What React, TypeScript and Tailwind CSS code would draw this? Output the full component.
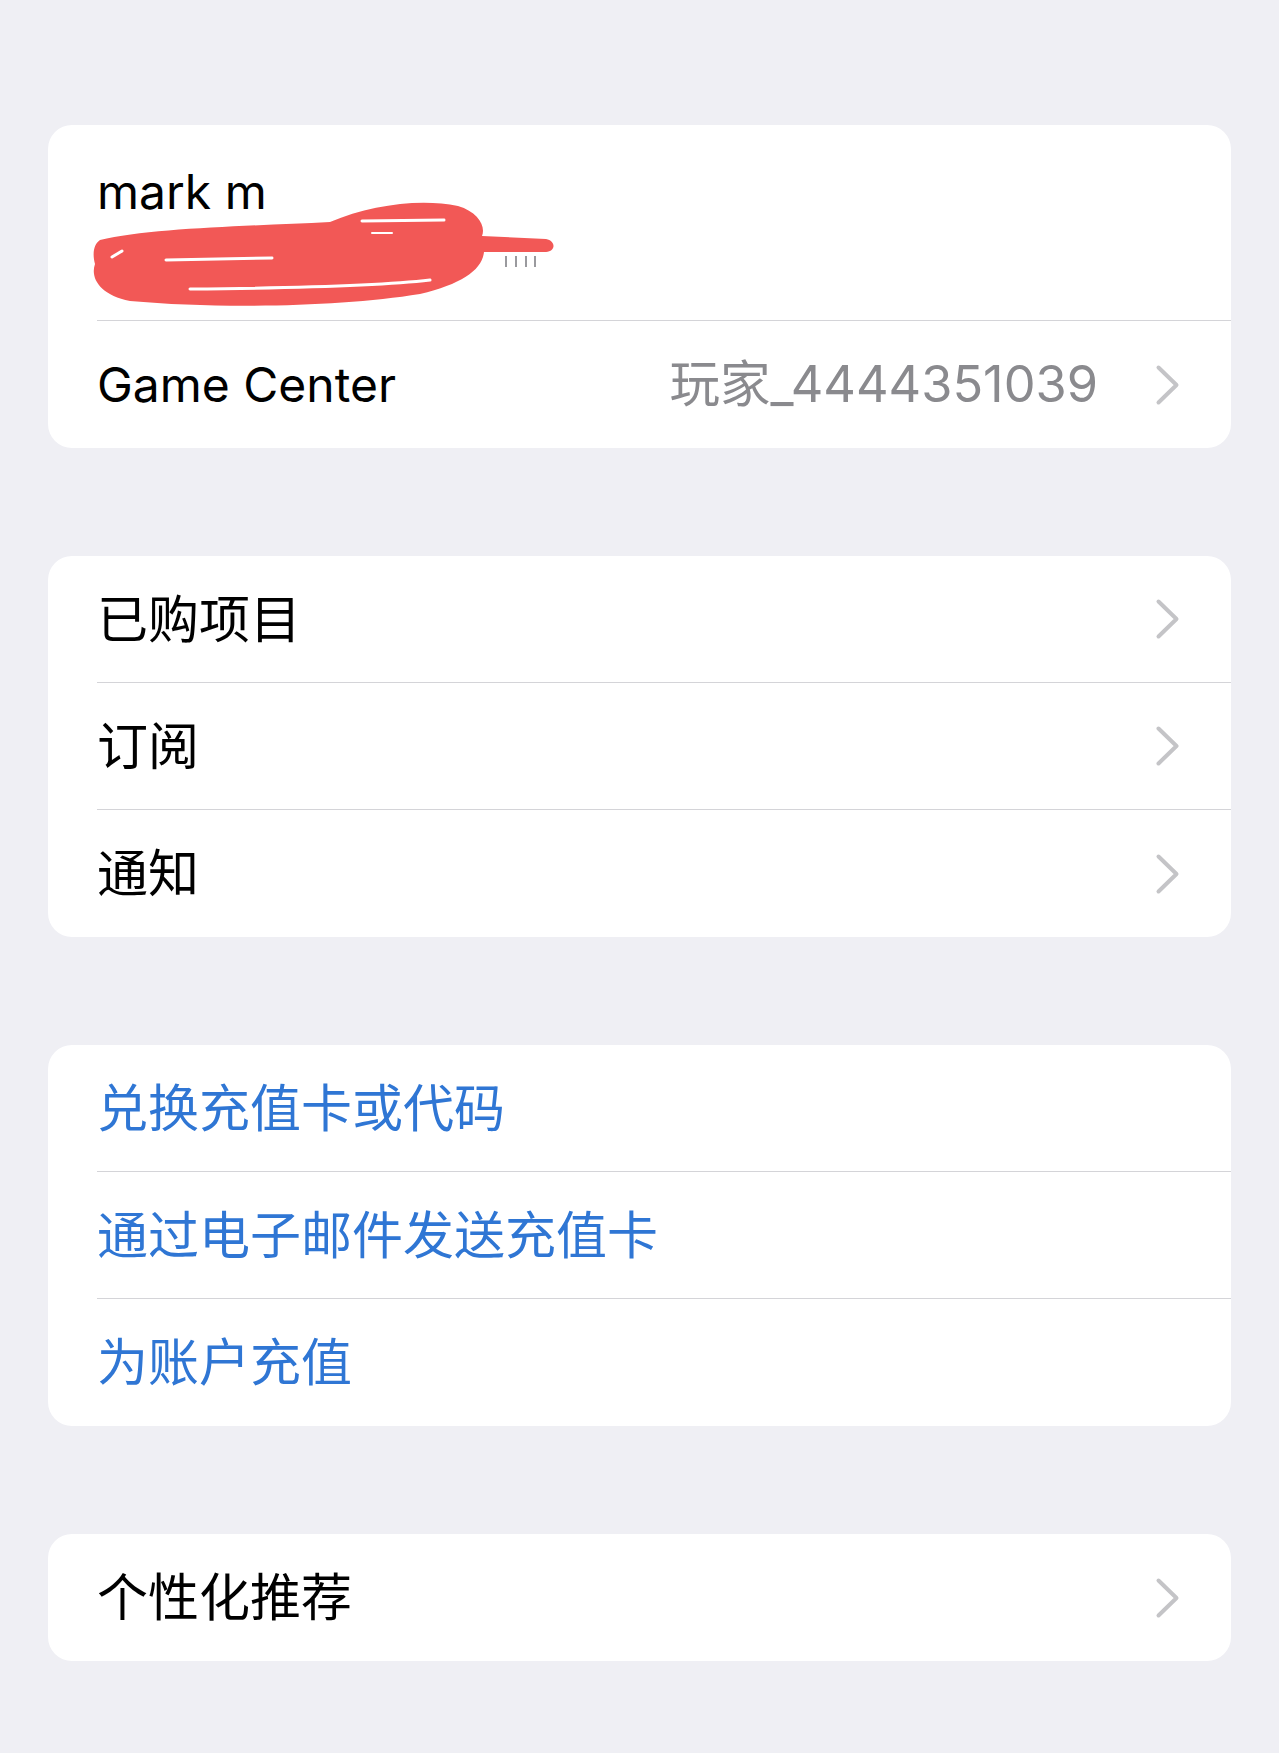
import React from 'react';

const font = { fontFamily: 'Inter, "Noto Sans CJK SC", sans-serif' };

const Chevron = () => (
  <svg width="25" height="42" viewBox="0 0 25 42" fill="none" className="shrink-0">
    <path d="M3.5 3.5 L21.5 21 L3.5 38.5" stroke="#c4c4c7" strokeWidth="4" strokeLinecap="round" strokeLinejoin="round" />
  </svg>
);

type RowProps = {
  label: string;
  value?: string;
  blue?: boolean;
  latin?: boolean;
  chevron?: boolean;
  last?: boolean;
};

const Row = ({ label, value, blue, latin, chevron, last }: RowProps) => (
  <div className="flex h-[127px] pl-[49px]">
    <div
      className={`flex flex-1 items-center pr-[51px] ${last ? '' : 'border-b border-[#d4d4d8]'}`}
    >
      <span
        className={`flex-1 leading-none ${latin ? 'text-[48px]' : 'text-[51px]'} ${
          blue ? 'text-[#2f76d4]' : 'text-black'
        }`}
      >
        {label}
      </span>
      {value && <span className="mr-[57px] text-[50.5px] leading-none text-[#8a8a8e]">{value}</span>}
      {chevron && <Chevron />}
    </div>
  </div>
);

// red pen scribble over the email address
const Scribble = () => (
  <svg
    className="absolute left-[40px] top-[70px]"
    width="470"
    height="120"
    viewBox="88 195 470 120"
    fill="none"
  >
    <path
      d="M100 240 C150 228 250 226 330 222 C370 205 420 198 458 206 C478 212 486 226 482 236 L546 239 C556 241 556 251 546 252 L484 252 C482 270 462 284 420 294 C340 307 220 309 130 301 C100 295 90 278 95 264 C92 253 94 244 100 240 Z"
      fill="#f25856"
    />
    <g stroke="#ffffff" strokeLinecap="round">
      <path d="M362 221 L444 220" strokeWidth="3" />
      <path d="M372 233 L392 233" strokeWidth="2" />
      <path d="M190 289 C300 288 380 286 430 280" strokeWidth="3" />
      <path d="M166 260 L272 258" strokeWidth="3" />
      <path d="M112 257 L122 251" strokeWidth="3" />
    </g>
    <g stroke="#9a9a9e" strokeWidth="2">
      <path d="M506 256 L506 267" />
      <path d="M516 256 L516 267" />
      <path d="M526 256 L526 267" />
      <path d="M535 256 L535 267" />
    </g>
  </svg>
);

export default function App() {
  return (
    <div className="min-h-[1753px] bg-[#efeff4] px-[48px] pt-[125px]" style={font}>
      <div className="flex flex-col gap-[108px]">
        <div className="overflow-hidden rounded-[24px] bg-white">
          <div className="relative h-[196px] pl-[49px]">
            <div className="h-full border-b border-[#d4d4d8] pt-[38px]">
              <div className="text-[48px] leading-[58px] text-black">mark m</div>
            </div>
            <Scribble />
          </div>
          <Row label="Game Center" value="玩家_4444351039" latin chevron last />
        </div>

        <div className="overflow-hidden rounded-[24px] bg-white">
          <Row label="已购项目" chevron />
          <Row label="订阅" chevron />
          <Row label="通知" chevron last />
        </div>

        <div className="overflow-hidden rounded-[24px] bg-white">
          <Row label="兑换充值卡或代码" blue />
          <Row label="通过电子邮件发送充值卡" blue />
          <Row label="为账户充值" blue last />
        </div>

        <div className="overflow-hidden rounded-[24px] bg-white">
          <Row label="个性化推荐" chevron last />
        </div>
      </div>
    </div>
  );
}
